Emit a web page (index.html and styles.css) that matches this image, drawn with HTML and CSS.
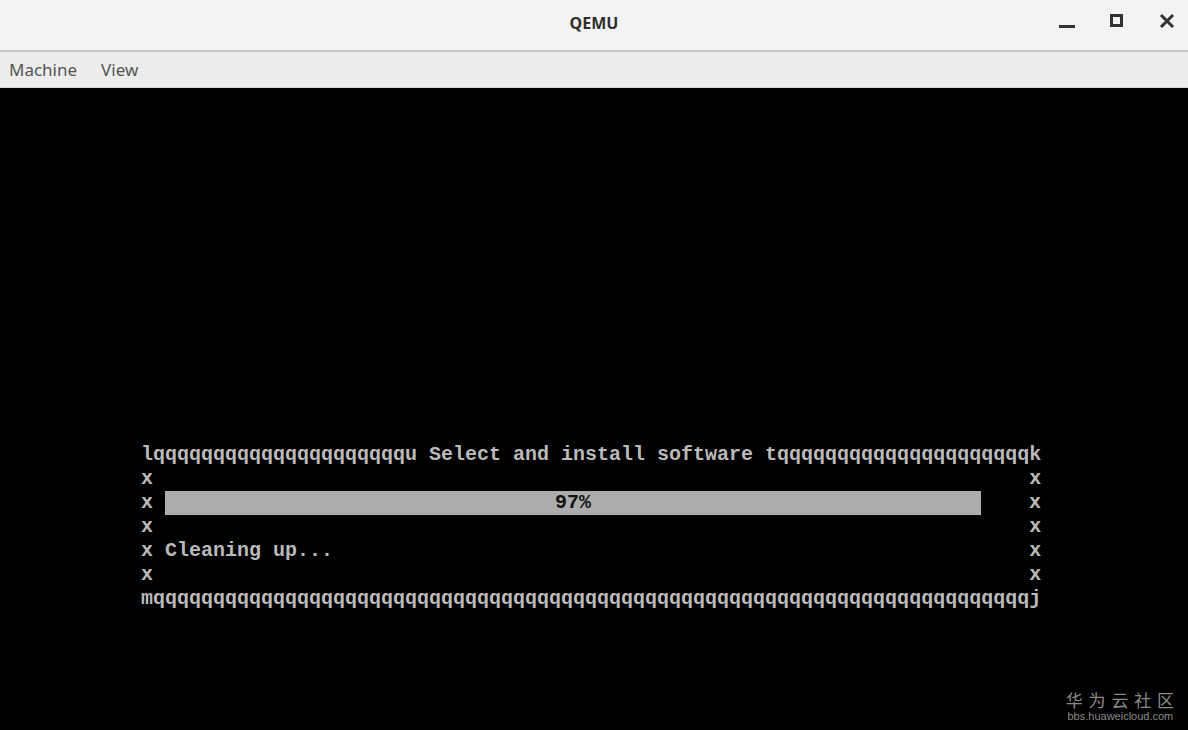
FILE: index.html
```html
<!DOCTYPE html>
<html lang="en">
<head>
  <meta charset="UTF-8" />
  <meta name="viewport" content="width=device-width, initial-scale=1.0"/>
  <title>QEMU</title>
  <link rel="stylesheet" href="styles.css">
</head>
<body>

  <div class="window">
    <div class="titlebar">
      <span class="title">QEMU</span>
      <div class="win-buttons">
        <svg width="18" height="18" viewBox="0 0 18 18"><rect x="1" y="12" width="16" height="3" fill="#333"/></svg>
        <svg width="18" height="18" viewBox="0 0 18 18"><rect x="3.5" y="2.5" width="10" height="10" fill="none" stroke="#333" stroke-width="3"/></svg>
        <svg width="18" height="18" viewBox="0 0 18 18"><path d="M3 2 L15 14 M15 2 L3 14" stroke="#333" stroke-width="3"/></svg>
      </div>
    </div>

    <div class="menubar">
      <span class="menu-item">Machine</span>
      <span class="menu-item">View</span>
    </div>

    <div class="screen">
      <div class="console">
        <div class="row">lqqqqqqqqqqqqqqqqqqqqqu Select and install software tqqqqqqqqqqqqqqqqqqqqqk</div>
        <div class="row">x                                                                         x</div>
        <div class="row">x <span class="bar">97%</span>    x</div>
        <div class="row">x                                                                         x</div>
        <div class="row">x Cleaning up...                                                          x</div>
        <div class="row">x                                                                         x</div>
        <div class="row">mqqqqqqqqqqqqqqqqqqqqqqqqqqqqqqqqqqqqqqqqqqqqqqqqqqqqqqqqqqqqqqqqqqqqqqqqqj</div>
      </div>

      <div class="watermark">
        <div class="wm-cn">华 为 云 社 区</div>
        <div class="wm-url">bbs.huaweicloud.com</div>
      </div>
    </div>
  </div>

</body>
</html>
```

FILE: styles.css
```css
* { box-sizing: border-box; }
body {
  margin: 0;
  background: #000;
  font-family: 'Noto Sans', 'Open Sans', sans-serif;
}

.window {
  width: 1188px;
  height: 730px;
  display: flex;
  flex-direction: column;
  overflow: hidden;
}

.titlebar {
  flex-shrink: 0;
  height: 52px;
  background: #f3f3f3;
  border-bottom: 2px solid #c4c4c4;
  display: flex;
  align-items: center;
  justify-content: center;
  position: relative;
}

.title {
  font-size: 16px;
  font-weight: bold;
  color: #2e2e2e;
  margin-top: -4px;
}

.win-buttons {
  position: absolute;
  right: 12px;
  top: 13px;
  display: flex;
  gap: 32px;
}

.menubar {
  flex-shrink: 0;
  height: 36px;
  background: #ececec;
  border-bottom: 1px solid #d6d6d6;
  display: flex;
  align-items: center;
  gap: 24px;
  padding: 0 9px;
}

.menu-item {
  font-size: 17px;
  color: #555;
}

.screen {
  flex: 1;
  background: #000;
  position: relative;
  padding: 355px 0 0 141px;
}

.console {
  font-family: 'Liberation Mono', monospace;
  font-size: 20px;
  font-weight: bold;
  line-height: 24px;
  color: #bababa;
}

.row {
  height: 24px;
  white-space: pre;
}

.bar {
  display: inline-block;
  width: 816px;
  height: 24px;
  background: #acacac;
  color: #111;
  text-align: center;
  vertical-align: top;
}

.watermark {
  position: absolute;
  right: 13px;
  bottom: 8px;
  text-align: center;
  color: #8a8a8a;
}

.wm-cn {
  font-family: 'Noto Sans CJK SC', sans-serif;
  font-size: 17px;
  line-height: 20px;
  letter-spacing: 1px;
}

.wm-url {
  font-family: 'Liberation Sans', sans-serif;
  font-size: 11px;
  line-height: 12px;
}
```
